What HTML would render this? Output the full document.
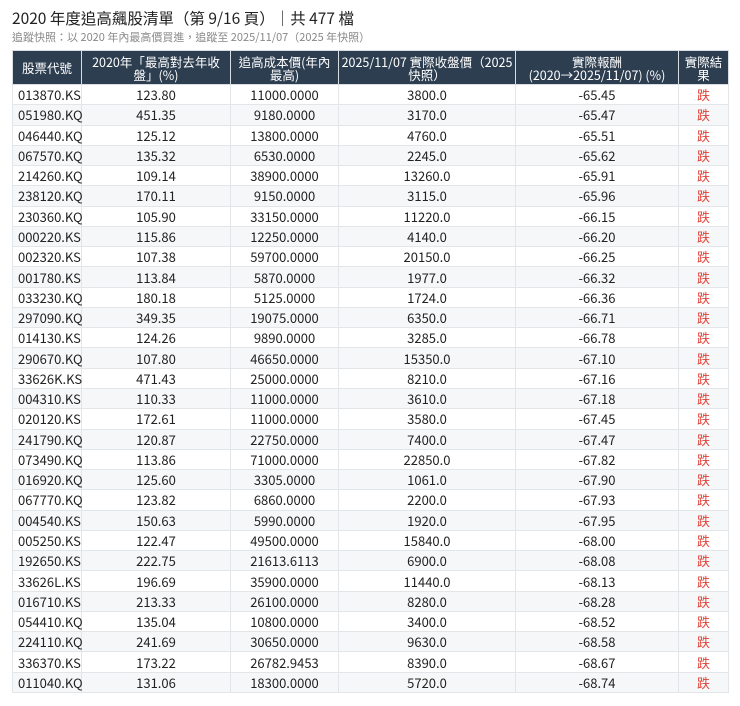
<!DOCTYPE html>
<html><head><meta charset="utf-8"><style>
body{margin:0;background:#fff;font-family:"Noto Sans CJK TC","Liberation Sans",sans-serif;color:#222;}
.t1{position:absolute;left:12px;top:8px;font-size:15.5px;line-height:20px;color:#222}
.t2{position:absolute;left:12px;top:30px;font-size:11px;line-height:14px;color:#888}
table{position:absolute;left:12px;top:50px;width:716px;border-collapse:collapse;font-size:13px;table-layout:fixed}
th{background:#2d3e50;color:#fff;font-weight:normal;height:33px;line-height:13px;padding:0 2px;border:1px solid #d8dde2;text-align:center;font-size:12.5px}
td{height:19.27px;line-height:19px;padding:0;border:1px solid #e3e6e9;text-align:center}
td:first-child{text-align:left;padding-left:5px}
tr:nth-child(even) td{background:#f6f7f8}
td.r{color:#e0443a}
</style></head><body>
<div class="t1">2020 年度追高飆股清單（第 9/16 頁）｜共 477 檔</div>
<div class="t2">追蹤快照：以 2020 年內最高價買進，追蹤至 2025/11/07（2025 年快照）</div>
<table>
<colgroup><col style="width:69px"><col style="width:149px"><col style="width:108px"><col style="width:177px"><col style="width:163px"><col style="width:50px"></colgroup>
<thead><tr><th>股票代號</th><th>2020年「最高對去年收盤」(%)</th><th>追高成本價(年內最高)</th><th>2025/11/07 實際收盤價（2025快照）</th><th>實際報酬<br>(2020→2025/11/07) (%)</th><th>實際結果</th></tr></thead>
<tbody>
<tr><td>013870.KS</td><td>123.80</td><td>11000.0000</td><td>3800.0</td><td>-65.45</td><td class="r">跌</td></tr>
<tr><td>051980.KQ</td><td>451.35</td><td>9180.0000</td><td>3170.0</td><td>-65.47</td><td class="r">跌</td></tr>
<tr><td>046440.KQ</td><td>125.12</td><td>13800.0000</td><td>4760.0</td><td>-65.51</td><td class="r">跌</td></tr>
<tr><td>067570.KQ</td><td>135.32</td><td>6530.0000</td><td>2245.0</td><td>-65.62</td><td class="r">跌</td></tr>
<tr><td>214260.KQ</td><td>109.14</td><td>38900.0000</td><td>13260.0</td><td>-65.91</td><td class="r">跌</td></tr>
<tr><td>238120.KQ</td><td>170.11</td><td>9150.0000</td><td>3115.0</td><td>-65.96</td><td class="r">跌</td></tr>
<tr><td>230360.KQ</td><td>105.90</td><td>33150.0000</td><td>11220.0</td><td>-66.15</td><td class="r">跌</td></tr>
<tr><td>000220.KS</td><td>115.86</td><td>12250.0000</td><td>4140.0</td><td>-66.20</td><td class="r">跌</td></tr>
<tr><td>002320.KS</td><td>107.38</td><td>59700.0000</td><td>20150.0</td><td>-66.25</td><td class="r">跌</td></tr>
<tr><td>001780.KS</td><td>113.84</td><td>5870.0000</td><td>1977.0</td><td>-66.32</td><td class="r">跌</td></tr>
<tr><td>033230.KQ</td><td>180.18</td><td>5125.0000</td><td>1724.0</td><td>-66.36</td><td class="r">跌</td></tr>
<tr><td>297090.KQ</td><td>349.35</td><td>19075.0000</td><td>6350.0</td><td>-66.71</td><td class="r">跌</td></tr>
<tr><td>014130.KS</td><td>124.26</td><td>9890.0000</td><td>3285.0</td><td>-66.78</td><td class="r">跌</td></tr>
<tr><td>290670.KQ</td><td>107.80</td><td>46650.0000</td><td>15350.0</td><td>-67.10</td><td class="r">跌</td></tr>
<tr><td>33626K.KS</td><td>471.43</td><td>25000.0000</td><td>8210.0</td><td>-67.16</td><td class="r">跌</td></tr>
<tr><td>004310.KS</td><td>110.33</td><td>11000.0000</td><td>3610.0</td><td>-67.18</td><td class="r">跌</td></tr>
<tr><td>020120.KS</td><td>172.61</td><td>11000.0000</td><td>3580.0</td><td>-67.45</td><td class="r">跌</td></tr>
<tr><td>241790.KQ</td><td>120.87</td><td>22750.0000</td><td>7400.0</td><td>-67.47</td><td class="r">跌</td></tr>
<tr><td>073490.KQ</td><td>113.86</td><td>71000.0000</td><td>22850.0</td><td>-67.82</td><td class="r">跌</td></tr>
<tr><td>016920.KQ</td><td>125.60</td><td>3305.0000</td><td>1061.0</td><td>-67.90</td><td class="r">跌</td></tr>
<tr><td>067770.KQ</td><td>123.82</td><td>6860.0000</td><td>2200.0</td><td>-67.93</td><td class="r">跌</td></tr>
<tr><td>004540.KS</td><td>150.63</td><td>5990.0000</td><td>1920.0</td><td>-67.95</td><td class="r">跌</td></tr>
<tr><td>005250.KS</td><td>122.47</td><td>49500.0000</td><td>15840.0</td><td>-68.00</td><td class="r">跌</td></tr>
<tr><td>192650.KS</td><td>222.75</td><td>21613.6113</td><td>6900.0</td><td>-68.08</td><td class="r">跌</td></tr>
<tr><td>33626L.KS</td><td>196.69</td><td>35900.0000</td><td>11440.0</td><td>-68.13</td><td class="r">跌</td></tr>
<tr><td>016710.KS</td><td>213.33</td><td>26100.0000</td><td>8280.0</td><td>-68.28</td><td class="r">跌</td></tr>
<tr><td>054410.KQ</td><td>135.04</td><td>10800.0000</td><td>3400.0</td><td>-68.52</td><td class="r">跌</td></tr>
<tr><td>224110.KQ</td><td>241.69</td><td>30650.0000</td><td>9630.0</td><td>-68.58</td><td class="r">跌</td></tr>
<tr><td>336370.KS</td><td>173.22</td><td>26782.9453</td><td>8390.0</td><td>-68.67</td><td class="r">跌</td></tr>
<tr><td>011040.KQ</td><td>131.06</td><td>18300.0000</td><td>5720.0</td><td>-68.74</td><td class="r">跌</td></tr>
</tbody></table>
</body></html>
